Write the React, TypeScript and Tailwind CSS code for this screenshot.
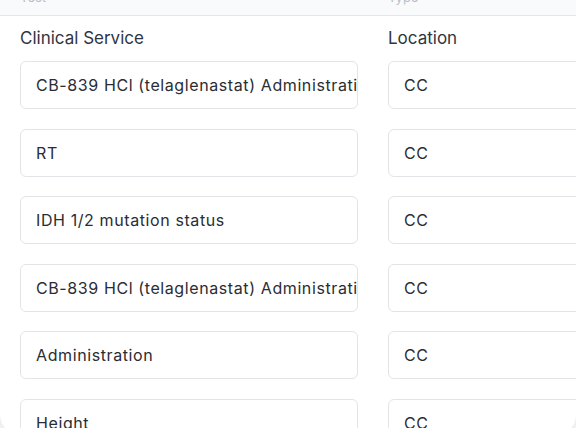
import React from "react";

const rows = [
  { service: "CB-839 HCl (telaglenastat) Administration", location: "CC" },
  { service: "RT", location: "CC" },
  { service: "IDH 1/2 mutation status", location: "CC" },
  { service: "CB-839 HCl (telaglenastat) Administration", location: "CC" },
  { service: "Administration", location: "CC" },
  { service: "Height", location: "CC" },
];

export default function App() {
  return (
    <div className="w-[576px] h-[428px] overflow-hidden bg-[#eef0f3] font-['Inter',sans-serif]">
      <div className="h-[436px] bg-white rounded-b-[22px] overflow-hidden">
        {/* clipped header row from the table above */}
        <div className="h-[16px] overflow-hidden bg-[#f8fafc] border-b border-[#e3e7ec] flex text-[13px] text-[#b8bfc9]">
          <span className="ml-[20px] -mt-[12px] w-[368px]">Test</span>
          <span className="-mt-[12px]">Type</span>
        </div>

        <div className="grid grid-cols-[338px_338px] gap-x-[30px] px-[20px] pt-[11px]">
          <div className="text-[17px] leading-[22px] text-[#2f3542]">Clinical Service</div>
          <div className="text-[17px] leading-[22px] text-[#2f3542]">Location</div>
        </div>

        <div className="grid grid-cols-[338px_338px] gap-x-[30px] gap-y-[19.6px] px-[20px] pt-[12px]">
          {rows.map((r, i) => (
            <React.Fragment key={i}>
              <div className="h-[48px] rounded-[6px] border border-[#e2e4e8] bg-white pl-[15px] flex items-center overflow-hidden">
                <span className="whitespace-nowrap text-[16px] tracking-[0.6px] text-[#2a2d33]">
                  {r.service}
                </span>
              </div>
              <div className="h-[48px] rounded-[6px] border border-[#e2e4e8] bg-white pl-[15px] flex items-center">
                <span className="text-[16px] tracking-[0.6px] text-[#2a2d33]">{r.location}</span>
              </div>
            </React.Fragment>
          ))}
        </div>
      </div>
    </div>
  );
}
